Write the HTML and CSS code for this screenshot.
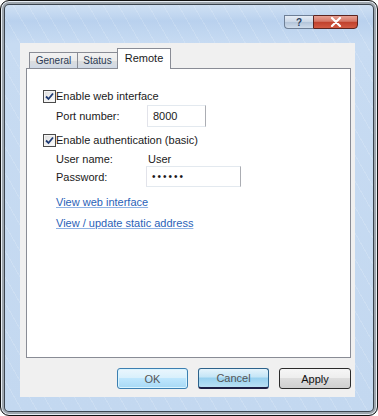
FILE: index.html
```html
<!DOCTYPE html>
<html>
<head>
<meta charset="utf-8">
<link rel="stylesheet" href="styles.css">
</head>
<body>
<div class="window">
  <div class="titlebar">
    <div class="cap-help"><span>?</span></div>
    <div class="cap-close">
      <svg width="14" height="10" viewBox="0 0 14 10"><path d="M3 1 L11 9 M11 1 L3 9" stroke="#fff" stroke-width="2.2" stroke-linecap="round"/></svg>
    </div>
  </div>
  <div class="client">
    <div class="tabs">
      <div class="tab t1">General</div>
      <div class="tab t2">Status</div>
      <div class="tab active">Remote</div>
    </div>
    <div class="panel">
      <div class="row chk-row">
        <span class="checkbox"><svg width="9" height="9" viewBox="0 0 9 9"><path d="M1 4.5 L3.5 7 L8 1.5" fill="none" stroke="#1f3b73" stroke-width="1.8"/></svg></span>
        <span>Enable web interface</span>
      </div>
      <div class="row field-row port">
        <span class="label">Port number:</span>
        <span class="input in-port">8000</span>
      </div>
      <div class="row chk-row auth">
        <span class="checkbox"><svg width="9" height="9" viewBox="0 0 9 9"><path d="M1 4.5 L3.5 7 L8 1.5" fill="none" stroke="#1f3b73" stroke-width="1.8"/></svg></span>
        <span>Enable authentication (basic)</span>
      </div>
      <div class="row field-row user">
        <span class="label">User name:</span>
        <span class="value">User</span>
      </div>
      <div class="row field-row pass">
        <span class="label">Password:</span>
        <span class="input in-pass">••••••</span>
      </div>
      <div class="row link-row l1"><a class="link">View web interface</a></div>
      <div class="row link-row l2"><a class="link">View / update static address</a></div>
    </div>
    <div class="buttons">
      <div class="btn btn-ok">OK</div>
      <div class="btn btn-cancel">Cancel</div>
      <div class="btn btn-apply">Apply</div>
    </div>
  </div>
</div>
</body>
</html>
```

FILE: styles.css
```css
html, body {
  margin: 0;
  padding: 0;
  background: #ffffff;
}
body {
  font-family: "Liberation Sans", Arial, sans-serif;
  font-size: 11px;
  color: #1a1a1a;
}
.window {
  box-sizing: border-box;
  width: 378px;
  height: 416px;
  border: 1px solid #111;
  border-radius: 9px;
  box-shadow: inset 0 0 0 1px #e8eef5, inset 0 0 0 3px #9ea6ae, inset 0 0 0 4px #3d4650;
  background:
    repeating-linear-gradient(60deg, rgba(255,255,255,0) 0 7px, rgba(255,255,255,0.15) 7px 8px, rgba(255,255,255,0) 8px 13px),
    linear-gradient(180deg, #d5e4f5 0, #b9d1ee 20px, #c7dbf2 42px, #c3d8f0 100%);
  overflow: hidden;
}
.titlebar {
  height: 42px;
  display: flex;
  justify-content: flex-end;
  align-items: flex-start;
  padding: 14px 19px 0 0;
  box-sizing: border-box;
}
.cap-help {
  width: 29px;
  height: 14px;
  box-sizing: border-box;
  border: 1px solid #6e7f96;
  border-right: none;
  border-radius: 0 0 0 4px;
  background: linear-gradient(180deg, #e6edf6 0, #c9d6e6 50%, #b3c4d9 51%, #cfdceb 100%);
  display: flex;
  align-items: center;
  justify-content: center;
  font-size: 10px;
  font-weight: bold;
  color: #2c3f5c;
}
.cap-close {
  width: 45px;
  height: 14px;
  box-sizing: border-box;
  border: 1px solid #5a2420;
  border-radius: 0 0 4px 0;
  background: linear-gradient(180deg, #e8a093 0, #d47565 45%, #c0402c 50%, #d25a43 100%);
  display: flex;
  align-items: center;
  justify-content: center;
}
.cap-close svg { display: block; }
.client {
  margin-left: 19px;
  width: 335px;
  height: 354px;
  box-sizing: border-box;
  background: #f0f0f0;
  padding: 5px 5px 0 6px;
}
.tabs {
  height: 20px;
  display: flex;
  align-items: flex-end;
  padding-left: 3px;
}
.tab {
  box-sizing: border-box;
  height: 16px;
  border: 1px solid #898c95;
  border-bottom: none;
  background: linear-gradient(180deg, #f2f2f2 0, #ebebeb 50%, #dddddd 51%, #cfd9e6 100%);
  font-size: 10px;
  line-height: 15px;
  text-align: center;
  color: #2a3a55;
}
.t1 { width: 49px; }
.t2 { width: 41px; margin-left: -1px; }
.tab.active {
  width: 54px;
  height: 21px;
  margin-left: -1px;
  margin-bottom: -1px;
  background: #ffffff;
  position: relative;
  z-index: 1;
  line-height: 19px;
  color: #1a1a1a;
  font-size: 11px;
}
.panel {
  box-sizing: border-box;
  width: 325px;
  height: 290px;
  border: 1px solid #898c95;
  background: #ffffff;
  padding: 19px 0 0 16px;
}
.row {
  display: flex;
  align-items: center;
}
.chk-row { height: 16px; }
.checkbox {
  box-sizing: border-box;
  width: 13px;
  height: 13px;
  border: 1px solid #4b4b4b;
  background: linear-gradient(135deg, #dcdcdc, #ffffff);
  box-shadow: inset 0 0 0 1px #f4f4f4;
  display: flex;
  align-items: center;
  justify-content: center;
}
.field-row { padding-left: 13px; }
.label { width: 90px; flex: none; }
.port { height: 22px; margin-top: 1px; }
.auth { margin-top: 5px; }
.user { height: 14px; margin-top: 4px; }
.pass { height: 21px; }
.input {
  box-sizing: border-box;
  height: 100%;
  border: 1px solid #abadb3;
  border-top-color: #e3e9ef;
  border-left-color: #e2e3ea;
  border-bottom-color: #e3e9ef;
  background: #fff;
  display: flex;
  align-items: center;
  padding-left: 5px;
}
.in-port { width: 59px; margin-left: 1px; }
.in-pass { width: 95px; letter-spacing: 2px; font-size: 10px; }
.value { margin-left: 2px; }
.link-row { height: 16px; padding-left: 13px; }
.l1 { margin-top: 7px; }
.l2 { margin-top: 5px; }
.link {
  color: #2a62b8;
  text-decoration: underline;
  text-decoration-color: #8fb2e4;
}
.buttons {
  display: flex;
  justify-content: flex-end;
  gap: 10px;
  width: 325px;
  margin-top: 10px;
}
.btn {
  box-sizing: border-box;
  width: 71px;
  height: 21px;
  border-radius: 3px;
  display: flex;
  align-items: center;
  justify-content: center;
  font-size: 11px;
}
.btn-ok {
  border: 1px solid #3c7fb1;
  background: linear-gradient(180deg, #eaf6fd 0, #d9f0fc 45%, #bee6fd 50%, #a7d9f5 100%);
  box-shadow: inset 0 0 0 1px #d9f4ff;
  color: #555;
}
.btn-cancel {
  border: 1px solid #2c628b;
  border-bottom: 2px solid #1d1f44;
  background: linear-gradient(180deg, #e5f4fc 0, #c4e5f6 45%, #98d1ef 50%, #b9dff3 100%);
  color: #555;
}
.btn-apply {
  width: 72px;
  border: 1px solid #2b2b2b;
  background: linear-gradient(180deg, #f6f6f6 0, #eeeeee 45%, #dddddd 50%, #cfcfcf 100%);
  color: #111;
}
```
